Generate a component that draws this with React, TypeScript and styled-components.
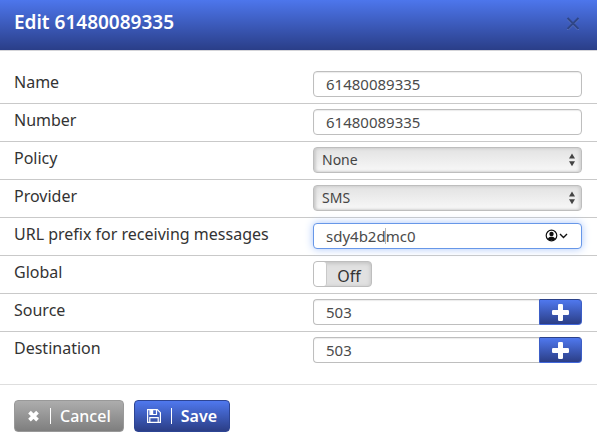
import React, { useState } from "react";
import styled, { createGlobalStyle, css } from "styled-components";

const GlobalStyle = createGlobalStyle`
  *, *::before, *::after { box-sizing: border-box; }
  body {
    margin: 0;
    background: #fff;
    color: #333;
    font-family: "Noto Sans", "Open Sans", sans-serif;
    font-size: 16px;
  }
  button, input, select { font-family: inherit; }
`;

const blueGradient = "linear-gradient(#4f78ee, #2b3e86)";

const Header = styled.header`
  display: flex;
  align-items: center;
  justify-content: space-between;
  height: 51px;
  padding: 0 15px 4px 14px;
  border-bottom: 1px solid #d5d5d9;
  background: linear-gradient(#4d76ec, #2a3e88);
`;

const Title = styled.h1`
  margin: 0;
  padding-bottom: 2px;
  color: #fff;
  font-size: 19px;
  font-weight: 600;
  line-height: 24px;
`;

const CloseButton = styled.button`
  display: flex;
  padding: 2px;
  border: 0;
  background: none;
  cursor: pointer;
`;

const Fields = styled.div`
  padding: 15px 0 14px;
`;

const Row = styled.div`
  display: grid;
  grid-template-columns: minmax(0, 299fr) minmax(0, 269fr);
  height: 38px;
  padding: 5px 15px 6px 14px;
  border-bottom: 1px solid #c9c9c9;
  &:last-child { border-bottom: 0; }
`;

const Label = styled.label`
  font-size: 16px;
  line-height: 22px;
  white-space: nowrap;
`;

const Control = styled.div`
  position: relative;
  display: flex;
  height: 26px;
`;

const TextInput = styled.input<{ $active?: boolean; $joined?: boolean }>`
  flex: 1;
  min-width: 0;
  height: 26px;
  padding: 0 12px;
  border: 1px solid #bebebe;
  border-radius: ${(p) => (p.$joined ? "4px 0 0 4px" : "4px")};
  ${(p) => p.$joined && "border-right: 0;"}
  outline: none;
  background: #fff;
  box-shadow: inset 0 1px 1px #ececec;
  color: #4b4b4b;
  font-size: 15px;
  ${(p) =>
    p.$active &&
    css`
      border-color: #6797e8;
      box-shadow: 0 0 8px #a9c6fa;
    `}
`;

const Caret = styled.span`
  position: absolute;
  top: 5px;
  left: 72px;
  width: 1px;
  height: 16px;
  background: #b5b5b5;
`;

const AccountButton = styled.button`
  position: absolute;
  top: 6px;
  right: 13px;
  display: flex;
  padding: 0;
  border: 0;
  background: none;
`;

const Select = styled.select`
  width: 100%;
  height: 26px;
  padding: 0 24px 1px 8px;
  border: 1px solid #bebebe;
  border-radius: 4px;
  appearance: none;
  outline: none;
  background: linear-gradient(#e2e2e2, #f8f8f8);
  box-shadow: inset 2px 0 3px #c9c9c9, inset -2px 0 3px #d2d2d2;
  color: #444;
  font-size: 14px;
`;

const SelectArrows = styled.svg`
  position: absolute;
  top: 6px;
  right: 7px;
  pointer-events: none;
`;

const Switch = styled.span<{ $on: boolean }>`
  position: relative;
  display: flex;
  flex-direction: ${(p) => (p.$on ? "row-reverse" : "row")};
  width: 59px;
  height: 26px;
  overflow: hidden;
  border: 1px solid #bebebe;
  border-radius: 4px;
  background: #e1e1e1;
  box-shadow: inset 0 1px 4px #bbb;
`;

const SwitchInput = styled.input`
  position: absolute;
  inset: 0;
  width: 100%;
  height: 100%;
  margin: 0;
  opacity: 0;
  cursor: pointer;
`;

const SwitchHandle = styled.span`
  width: 13px;
  border-right: 1px solid #c9c9c9;
  border-radius: 3px;
  background: #fff;
`;

const SwitchText = styled.span`
  flex: 1;
  padding-top: 2px;
  color: #333;
  font-size: 16px;
  line-height: 24px;
  text-align: center;
`;

const AddButton = styled.button`
  display: flex;
  align-items: center;
  justify-content: center;
  width: 43px;
  height: 26px;
  padding: 0;
  border: 1px solid #3c5ec6;
  border-top-color: #2c4289;
  border-bottom-color: #4268dc;
  border-radius: 0 4px 4px 0;
  background: ${blueGradient};
  cursor: pointer;
`;

const Footer = styled.footer`
  display: flex;
  gap: 10px;
  padding: 15px 14px 14px;
  border-top: 1px solid #dedede;
`;

const ActionButton = styled.button<{ $primary?: boolean }>`
  display: flex;
  align-items: center;
  height: 32px;
  padding: 0 12px;
  border: 1px solid ${(p) => (p.$primary ? "#2d4594" : "#999")};
  border-radius: 4px;
  background: ${(p) => (p.$primary ? blueGradient : "linear-gradient(#adadad, #7e7e7e)")};
  color: #fff;
  font-size: 16px;
  font-weight: ${(p) => (p.$primary ? 600 : 500)};
  line-height: 24px;
  cursor: pointer;
`;

const Divider = styled.span`
  width: 1px;
  height: 16px;
  margin: 0 9px 0 10px;
  background: #fff;
`;

const CloseIcon = () => (
  <svg width="14" height="14" viewBox="0 0 14 14" aria-hidden="true">
    <path d="M1.5 3l11 11M12.5 3l-11 11" stroke="#6279c4" strokeWidth="1.6" />
    <path d="M1.5 2l11 11M12.5 2l-11 11" stroke="#2f4687" strokeWidth="2" />
  </svg>
);

const AccountIcon = () => (
  <svg width="24" height="13" viewBox="0 0 24 13" aria-hidden="true">
    <circle cx="6.5" cy="6.5" r="5.3" fill="none" stroke="#111" strokeWidth="1.2" />
    <circle cx="6.5" cy="5" r="2.2" fill="#111" />
    <path d="M2.8 10C3.3 8.4 4.7 7.8 6.5 7.8S9.7 8.4 10.2 10L8.6 11.2H4.4z" fill="#111" />
    <path d="M15 5l3.5 3.5L22 5" fill="none" stroke="#111" strokeWidth="1.4" />
  </svg>
);

const PlusIcon = () => (
  <svg width="17" height="17" viewBox="0 0 17 17" fill="#fff" aria-hidden="true">
    <rect x="6" y="0" width="5" height="17" rx="1.2" />
    <rect x="0" y="6" width="17" height="5" rx="1.2" />
  </svg>
);

const CancelIcon = () => (
  <svg width="13" height="14" viewBox="0 0 13 14" aria-hidden="true">
    <path d="M2.5 3.2l8 8M10.5 3.2l-8 8" stroke="#fff" strokeWidth="3.8" />
  </svg>
);

const SaveIcon = () => (
  <svg width="14" height="14" viewBox="0 0 14 14" fill="none" stroke="#fff" aria-hidden="true">
    <path d="M.6.6h9.7l3.1 3.1v9.7H.6z" strokeWidth="1.2" />
    <path d="M3 .8v4.7h6.5V.8M2.8 13V8.6h8.4V13" strokeWidth="1.2" />
    <path d="M3.2 1h3v4h-3z" fill="#fff" stroke="none" />
  </svg>
);

const Arrows = () => (
  <SelectArrows width="6" height="14" viewBox="0 0 6 14" aria-hidden="true">
    <path d="M3 .5l3 5H0zM0 8.2h6l-3 5z" fill="#444" />
  </SelectArrows>
);

function TextField({ id, label, value }: { id: string; label: string; value: string }) {
  return (
    <Row>
      <Label htmlFor={id}>{label}</Label>
      <Control>
        <TextInput id={id} type="text" defaultValue={value} />
      </Control>
    </Row>
  );
}

function SelectField({ id, label, value }: { id: string; label: string; value: string }) {
  return (
    <Row>
      <Label htmlFor={id}>{label}</Label>
      <Control>
        <Select id={id} defaultValue={value}>
          <option>{value}</option>
        </Select>
        <Arrows />
      </Control>
    </Row>
  );
}

function LookupField({ id, label, value }: { id: string; label: string; value: string }) {
  return (
    <Row>
      <Label htmlFor={id}>{label}</Label>
      <Control>
        <TextInput id={id} type="text" defaultValue={value} $joined />
        <AddButton type="button" aria-label={`Add ${label.toLowerCase()}`}>
          <PlusIcon />
        </AddButton>
      </Control>
    </Row>
  );
}

export default function App() {
  const [isGlobal, setIsGlobal] = useState(false);

  return (
    <form onSubmit={(e) => e.preventDefault()}>
      <GlobalStyle />
      <Header>
        <Title>Edit 61480089335</Title>
        <CloseButton type="button" aria-label="Close">
          <CloseIcon />
        </CloseButton>
      </Header>
      <Fields>
        <TextField id="name" label="Name" value="61480089335" />
        <TextField id="number" label="Number" value="61480089335" />
        <SelectField id="policy" label="Policy" value="None" />
        <SelectField id="provider" label="Provider" value="SMS" />
        <Row>
          <Label htmlFor="prefix">URL prefix for receiving messages</Label>
          <Control>
            <TextInput id="prefix" type="text" defaultValue="sdy4b2dmc0" $active />
            <Caret />
            <AccountButton type="button" aria-label="Autofill account">
              <AccountIcon />
            </AccountButton>
          </Control>
        </Row>
        <Row>
          <Label htmlFor="global">Global</Label>
          <Control>
            <Switch $on={isGlobal}>
              <SwitchHandle />
              <SwitchText>{isGlobal ? "On" : "Off"}</SwitchText>
              <SwitchInput
                id="global"
                type="checkbox"
                checked={isGlobal}
                onChange={(e) => setIsGlobal(e.target.checked)}
              />
            </Switch>
          </Control>
        </Row>
        <LookupField id="source" label="Source" value="503" />
        <LookupField id="destination" label="Destination" value="503" />
      </Fields>
      <Footer>
        <ActionButton type="button">
          <CancelIcon />
          <Divider />
          Cancel
        </ActionButton>
        <ActionButton type="submit" $primary>
          <SaveIcon />
          <Divider />
          Save
        </ActionButton>
      </Footer>
    </form>
  );
}
